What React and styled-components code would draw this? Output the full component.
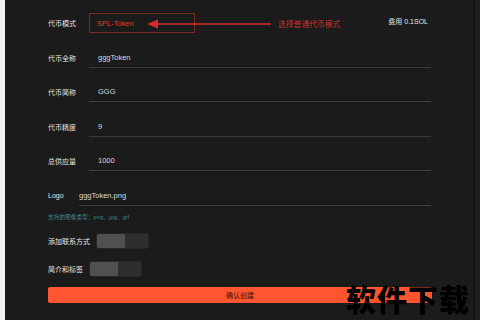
import React from 'react'
import styled, { createGlobalStyle } from 'styled-components'

const Global = createGlobalStyle`
html, body {
  margin: 0;
  padding: 0;
  background: #1b1b1b;
}
body {
  font-family: "Liberation Sans", "Noto Sans CJK SC", sans-serif;
}
`

const Page = styled.div`
width: 480px;
height: 320px;
display: flex;
position: relative;
overflow: hidden;
`

const LeftEdge = styled.div`
width: 5px;
background: #f2f2f2;
`

const RightEdge = styled.div`
width: 5px;
background: #1e1e1e;
border-left: 1px solid #101010;
`

const Content = styled.div`
flex: 1;
background: #1b1b1b;
padding: 6px 0 0 43px;
display: flex;
flex-direction: column;
`

const Row = styled.div`
position: relative;
height: 34.5px;
display: flex;
align-items: center;
`

const Label = styled.div`
width: ${p => p.w || 41}px;
flex-shrink: 0;
font-size: 7px;
color: #e4e4e4;
`

const Field = styled.div`
width: ${p => p.w || 342}px;
height: 20px;
box-sizing: border-box;
display: flex;
align-items: center;
padding-left: ${p => p.pad ?? 9}px;
font-size: 7.5px;
color: #dcdcdc;
border-bottom: 1px solid #3a3a3a;
`

const ModeBox = styled.div`
width: 106px;
height: 20px;
box-sizing: border-box;
border: 1px solid #7a2a22;
display: flex;
align-items: center;
padding-left: 7px;
font-size: 7.5px;
color: #d8402f;
`

const Fee = styled.div`
margin-left: auto;
margin-right: 46px;
margin-top: -5px;
font-size: 7px;
color: #e8e8e8;
`

const Arrow = styled.svg`
position: absolute;
left: 99px;
top: 12px;
`

const Note = styled.div`
position: absolute;
left: 230px;
top: 12px;
font-size: 7.8px;
color: #c8302c;
`

const Hint = styled.div`
height: 20px;
display: flex;
align-items: center;
margin-top: -6px;
font-size: 5.5px;
color: #3f8a86;
letter-spacing: 0.2px;
`

const ToggleRow = styled.div`
height: 28px;
display: flex;
align-items: center;
`

const ToggleLabel = styled.div`
font-size: 7px;
color: #e4e4e4;
margin-right: ${p => p.gap}px;
`

const Toggle = styled.div`
width: 53px;
height: 16px;
border-radius: 3px;
display: flex;
overflow: hidden;
background: #2e2e2e;
border: 1px solid #262626;
box-sizing: border-box;
`

const Knob = styled.div`
width: 28px;
background: #505050;
`

const Button = styled.div`
width: 384px;
height: 16px;
margin-top: 4px;
background: #ff5530;
border-radius: 2px;
display: flex;
align-items: center;
justify-content: center;
font-size: 7px;
color: #3a1408;
`

const Watermark = styled.div`
position: absolute;
left: 346px;
top: 276px;
font-family: "Noto Sans CJK SC", sans-serif;
font-size: 30px;
font-weight: 900;
color: #000;
letter-spacing: 1px;
`

const rows = [
  { label: '代币全称', value: 'gggToken' },
  { label: '代币简称', value: 'GGG' },
  { label: '代币精度', value: '9' },
  { label: '总供应量', value: '1000' },
]

const App = () => {
  return (
    <Page>
      <Global />
      <LeftEdge />
      <Content>
        <Row>
          <Label>代币模式</Label>
          <ModeBox>SPL-Token</ModeBox>
          <Arrow width="124" height="12" viewBox="0 0 124 12">
            <line x1="8" y1="6" x2="124" y2="6" stroke="#d82a2a" strokeWidth="1.6" />
            <polygon points="0,6 11,1.5 11,10.5" fill="#d82a2a" />
          </Arrow>
          <Note>选择普通代币模式</Note>
          <Fee>费用 0.1SOL</Fee>
        </Row>
        {rows.map(r => (
          <Row key={r.label}>
            <Label>{r.label}</Label>
            <Field>{r.value}</Field>
          </Row>
        ))}
        <Row>
          <Label w={31}>Logo</Label>
          <Field w={352} pad={0}>gggToken.png</Field>
        </Row>
        <Hint>支持的图像类型：png、jpg、gif</Hint>
        <ToggleRow>
          <ToggleLabel gap={6}>添加联系方式</ToggleLabel>
          <Toggle><Knob /></Toggle>
        </ToggleRow>
        <ToggleRow>
          <ToggleLabel gap={6}>简介和标签</ToggleLabel>
          <Toggle><Knob /></Toggle>
        </ToggleRow>
        <Button>确认创建</Button>
      </Content>
      <RightEdge />
      <Watermark>软件下载</Watermark>
    </Page>
  )
}

export default App
